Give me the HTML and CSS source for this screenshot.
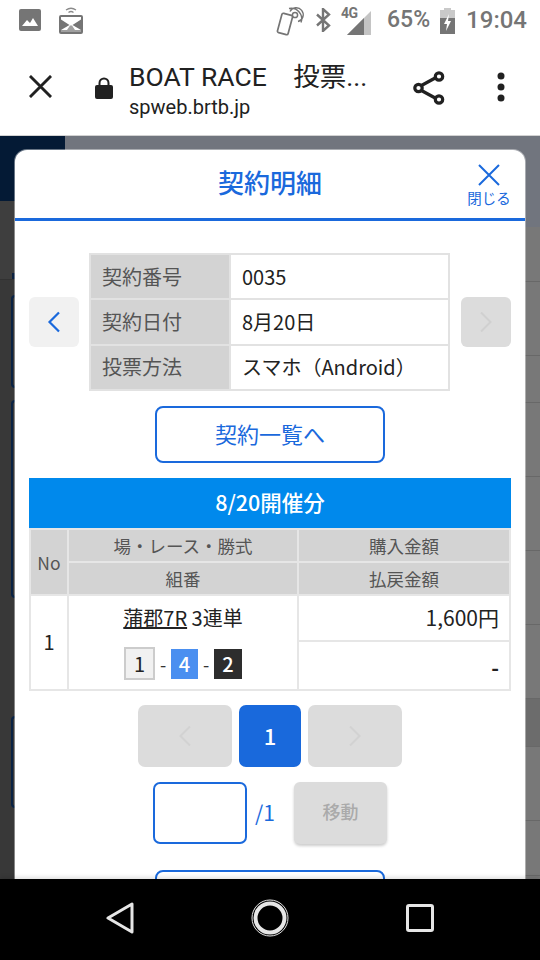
FILE: index.html
```html
<!DOCTYPE html>
<html lang="ja">
<head>
<meta charset="utf-8">
<title>契約明細</title>
<link rel="stylesheet" href="styles.css">
</head>
<body>
<div class="screen">
  <header class="status">
    <div class="status-left">
      <svg class="ic-pic" viewBox="0 0 22 22"><rect width="22" height="22" rx="2" fill="#757575"/><path d="M3 17l5-6 3 3 3-5 5 8z" fill="#fff"/></svg>
      <svg class="ic-cast" viewBox="0 0 24 28"><g fill="none" stroke="#8a8a8a" stroke-width="1.300"><path d="M7 4q5-3.500 10 0M9.500 6.500q2.500-2 5 0"/></g><rect x="1" y="10" width="22" height="17" rx="1" fill="#fff" stroke="#757575" stroke-width="2"/><path d="M2 13.500L10.500 19 2 24zM22 13.500L13.500 19 22 24z" fill="#757575"/><path d="M2 24h6l3-4.500h2l3 4.500h6v2H2z" fill="#a0a0a0"/></svg>
    </div>
    <div class="status-right">
      <svg class="ic-nfc" viewBox="0 0 30 30"><g fill="none" stroke="#757575"><rect x="4.500" y="8" width="11" height="20" rx="1.600" stroke-width="1.700" transform="rotate(15 10 18)"/><circle cx="20" cy="9" r="2.600" stroke-width="1.500"/><path d="M15 5.500a7 7 0 1 1 8 10M14 2.500a10.500 10.500 0 0 1 12 14" stroke-width="1.400"/></g></svg>
      <svg class="ic-bt" viewBox="0 0 16 24"><path d="M2 6.500l12 11-6 5.500V1l6 5.500-12 11" fill="none" stroke="#757575" stroke-width="2.400"/></svg>
      <div class="signal">
        <span class="four-g">4G</span>
        <svg class="ic-signal" viewBox="0 0 24 24"><path d="M24 0v24H0z" fill="#c4c4c4"/><path d="M17 7v17H0z" fill="#757575"/></svg>
      </div>
      <span class="pct">65%</span>
      <svg class="ic-batt" viewBox="0 0 15 26"><path d="M4 0h7v2h4v24H0V2h4z" fill="#c9c9c9"/><path d="M0 10h15v16H0z" fill="#757575"/><path d="M9 6l-5 10h3l-1 7 5-10H8z" fill="#fff"/></svg>
      <span class="clock">19:04</span>
    </div>
  </header>

  <nav class="toolbar">
    <svg class="tb-close" viewBox="0 0 24 24"><path d="M1 1l22 22M23 1L1 23" stroke="#212121" stroke-width="3" fill="none"/></svg>
    <svg class="tb-lock" viewBox="0 0 18 22"><path d="M4.500 9V6a4.500 4.500 0 0 1 9 0v3" fill="none" stroke="#212121" stroke-width="2"/><rect y="8" width="18" height="14" rx="2" fill="#212121"/></svg>
    <div class="tb-text">
      <div class="tb-title">BOAT RACE　投票...</div>
      <div class="tb-url">spweb.brtb.jp</div>
    </div>
    <svg class="tb-share" viewBox="0 0 32 34"><g fill="none" stroke="#212121" stroke-width="3.200"><path d="M7.500 15L24 6M7.500 19L24 28"/><circle cx="5.500" cy="17" r="3.700" fill="#fff"/><circle cx="26" cy="5.500" r="3.700" fill="#fff"/><circle cx="26" cy="28.500" r="3.700" fill="#fff"/></g></svg>
    <svg class="tb-more" viewBox="0 0 8 30"><circle cx="4" cy="4" r="3.500" fill="#212121"/><circle cx="4" cy="15" r="3.500" fill="#212121"/><circle cx="4" cy="26" r="3.500" fill="#212121"/></svg>
  </nav>

  <main class="page">
    <div class="backdrop">
      <div class="back-left">
        <div class="bl-navy"></div>
        <div class="bl-head"><i class="bl-tab"></i></div>
        <div class="bl-card bl-c1"></div>
        <div class="bl-card bl-c2"></div>
        <div class="bl-card bl-c3"></div>
      </div>
      <div class="back-right">
        <div class="br-band"></div>
        <div class="br-row br-a"></div>
        <div class="br-row br-b"></div>
        <div class="br-row br-c"></div>
        <div class="br-row br-b"></div>
        <div class="br-row br-b"></div>
        <div class="br-row br-b"></div>
        <div class="br-row br-b"></div>
        <div class="br-row br-c br-dark"></div>
        <div class="br-row br-b"></div>
        <div class="br-row br-a"></div>
      </div>
    </div>

    <section class="modal">
      <div class="modal-head">
        <h1 class="modal-title">契約明細</h1>
        <button class="modal-close">
          <svg class="mc-x" viewBox="0 0 22 22"><path d="M1 1l20 20M21 1L1 21" stroke="#1a69dc" stroke-width="2" fill="none"/></svg>
          <span class="mc-label">閉じる</span>
        </button>
      </div>

      <div class="modal-body">
        <div class="detail">
          <button class="side-btn side-on"><svg class="chev" viewBox="0 0 14 22"><path d="M12 1.500L2.500 11l9.500 9.500" fill="none" stroke="#1a69dc" stroke-width="2.200"/></svg></button>
          <table class="info">
            <tr><th>契約番号</th><td>0035</td></tr>
            <tr><th>契約日付</th><td>8月20日</td></tr>
            <tr><th>投票方法</th><td>スマホ（Android）</td></tr>
          </table>
          <button class="side-btn side-off"><svg class="chev" viewBox="0 0 14 22"><path d="M2 1.500L11.500 11 2 20.500" fill="none" stroke="#d0d0d0" stroke-width="2"/></svg></button>
        </div>

        <button class="outline-btn">契約一覧へ</button>

        <div class="day-bar">8/20開催分</div>
        <table class="list">
          <colgroup><col class="col-no"><col class="col-race"><col class="col-amt"></colgroup>
          <tr class="lh"><th rowspan="2">No</th><th>場・レース・勝式</th><th>購入金額</th></tr>
          <tr class="lh"><th>組番</th><th>払戻金額</th></tr>
          <tr class="lb1">
            <td rowspan="2" class="c-no">1</td>
            <td rowspan="2" class="c-race">
              <div class="race-name"><u>蒲郡7R</u> 3連単</div>
              <div class="combo"><span class="b b1">1</span><span class="dash">-</span><span class="b b4">4</span><span class="dash">-</span><span class="b b2">2</span></div>
            </td>
            <td class="c-amt">1,600円</td>
          </tr>
          <tr class="lb2"><td class="c-amt c-ref">-</td></tr>
        </table>

        <div class="pager">
          <button class="pg-arrow"><svg class="pg-chev" viewBox="0 0 14 22"><path d="M12 1.500L2.500 11l9.500 9.500" fill="none" stroke="#d2d2d2" stroke-width="2"/></svg></button>
          <button class="pg-num">1</button>
          <button class="pg-arrow"><svg class="pg-chev" viewBox="0 0 14 22"><path d="M2 1.500L11.500 11 2 20.500" fill="none" stroke="#d2d2d2" stroke-width="2"/></svg></button>
        </div>

        <div class="jump">
          <div class="jump-input"></div>
          <span class="jump-total">/1</span>
          <button class="jump-btn">移動</button>
        </div>

        <button class="outline-btn outline-next"></button>
      </div>
    </section>
  </main>

  <footer class="navbar">
    <svg class="nav-back" viewBox="0 0 28 32"><path d="M2 16L26 2v28z" fill="none" stroke="#e6e6e6" stroke-width="3" stroke-linejoin="round"/></svg>
    <svg class="nav-home" viewBox="0 0 38 38"><circle cx="19" cy="19" r="18" fill="none" stroke="#e6e6e6" stroke-width="1"/><circle cx="19" cy="19" r="14.500" fill="none" stroke="#e6e6e6" stroke-width="4"/></svg>
    <svg class="nav-recent" viewBox="0 0 28 28"><rect x="1.500" y="1.500" width="25" height="25" rx="1.500" fill="none" stroke="#e6e6e6" stroke-width="3"/></svg>
  </footer>
</div>
</body>
</html>
```

FILE: styles.css
```css
* { box-sizing: border-box; }
html, body { margin: 0; padding: 0; background: #000; }
body { font-family: "Noto Sans CJK JP", "Noto Sans", sans-serif; }
button { font-family: inherit; padding: 0; border: 0; cursor: pointer; }
h1 { margin: 0; }
svg { display: block; flex: none; }

.screen { width: 540px; height: 960px; display: flex; flex-direction: column; overflow: hidden; background: #fff; }

/* status bar */
.status { height: 40px; flex: none; display: flex; justify-content: space-between; align-items: center; padding: 0 13px 0 19px; font-family: Roboto, sans-serif; color: #757575; }
.status-left { display: flex; align-items: center; gap: 18px; }
.ic-pic { width: 22px; height: 22px; }
.ic-cast { width: 24px; height: 28px; margin-top: 0; }
.status-right { display: flex; align-items: center; }
.ic-nfc { width: 30px; height: 30px; margin-top: 2px; }
.ic-bt { width: 16px; height: 24px; margin-left: 10px; }
.signal { position: relative; width: 30px; height: 24px; margin-left: 10px; margin-top: 1px; }
.four-g { position: absolute; left: 0; top: -2px; font-size: 14px; font-weight: 700; line-height: 12px; letter-spacing: -.5px; }
.ic-signal { position: absolute; right: 0; bottom: -2px; width: 24px; height: 24px; }
.pct { font-size: 23px; font-weight: 500; margin-left: 16px; line-height: 24px; }
.ic-batt { width: 15px; height: 26px; margin-left: 10px; margin-top: 1px; }
.clock { font-size: 24px; font-weight: 500; margin-left: 11px; line-height: 24px; }

/* toolbar */
.toolbar { height: 96px; flex: none; display: flex; align-items: center; border-bottom: 1px solid #d2d2d2; padding-left: 29px; }
.tb-close { width: 23px; height: 23px; margin-top: -2px; }
.tb-lock { width: 18px; height: 24px; margin-left: 43px; margin-top: 0; }
.tb-text { width: 262px; margin-left: 16px; margin-top: 6px; font-family: Roboto, "Noto Sans CJK JP", sans-serif; color: #212121; }
.tb-title { font-size: 26.500px; line-height: 32px; white-space: nowrap; }
.tb-url { font-size: 20px; line-height: 28px; }
.tb-share { width: 32px; height: 34px; margin-left: 22px; margin-top: 0; }
.tb-more { width: 8px; height: 30px; margin-left: 52px; margin-top: -2px; }

/* page behind the dialog */
.page { position: relative; height: 743px; flex: none; overflow: hidden; }
.backdrop { display: flex; height: 100%; }
.back-left { width: 65px; background: #383838; }
.bl-navy { height: 65px; background: #041a35; }
.bl-head { height: 79px; background: #3e3e3e; border-bottom: 1px solid #323232; padding: 72px 0 0 12px; }
.bl-tab { display: block; width: 3px; height: 6px; background: #0c2240; }
.bl-card { width: 4px; margin-left: 11px; border: solid #0a2344; border-width: 2px 0 2px 2px; border-radius: 4px 0 0 4px; }
.bl-c1 { height: 93px; margin-top: 15px; }
.bl-c2 { height: 198px; margin-top: 12px; }
.bl-c3 { height: 92px; margin-top: 118px; }
.back-right { flex: 1; background: #787878; }
.br-band { height: 91px; background: #71757e; }
.br-row { border-bottom: 1px solid #686868; }
.br-a { height: 55px; }
.br-b { height: 74px; }
.br-c { height: 47px; }
.br-dark { height: 48px; background: #6c6c6c; }

/* dialog */
.modal { position: absolute; left: 15px; top: 14px; width: 510px; height: 760px; background: #fff; border-radius: 12px 12px 0 0; box-shadow: 0 0 0 1px rgba(255, 255, 255, .4); }
.modal-head { position: relative; height: 71px; border-bottom: 3px solid #1a69dc; display: flex; justify-content: center; align-items: center; }
.modal-title { font-size: 26px; font-weight: 500; color: #1a69dc; line-height: 36px; margin-top: -5px; }
.modal-close { position: absolute; right: 14px; top: 14px; width: 44px; background: none; display: flex; flex-direction: column; align-items: center; color: #1a69dc; }
.mc-x { width: 22px; height: 22px; }
.mc-label { font-size: 14.500px; line-height: 18px; margin-top: 3px; white-space: nowrap; }

.modal-body { padding: 32px 14px 0; display: flex; flex-direction: column; align-items: center; }

.detail { width: 100%; display: flex; justify-content: space-between; align-items: center; }
.side-btn { width: 50px; height: 50px; border-radius: 6px; display: flex; align-items: center; justify-content: center; }
.side-on { background: #f1f1f1; }
.side-off { background: #dcdcdc; }
.chev { width: 14px; height: 22px; }

.info { width: 361px; height: 138px; margin-right: 1px; border-collapse: collapse; table-layout: fixed; font-size: 20px; }
.info th, .info td { border: 2px solid #e2e2e2; padding: 0 0 0 11px; text-align: left; font-weight: 400; height: 45.300px; line-height: 28px; }
.info th { width: 140px; background: #d3d3d3; color: #555; }
.info td { color: #222; }

.outline-btn { width: 230px; height: 57px; margin-top: 15px; flex: none; background: #fff; border: 2px solid #1a69dc; border-radius: 8px; color: #1a69dc; font-size: 22px; padding-bottom: 3px; }
.outline-next { margin-top: 26px; }

.day-bar { width: 100%; height: 50px; margin-top: 15px; background: #0089ec; color: #fff; font-size: 21.500px; font-weight: 500; display: flex; align-items: center; justify-content: center; padding-bottom: 3px; }

.list { width: 100%; border-collapse: collapse; table-layout: fixed; font-size: 21px; }
.col-no { width: 38px; }
.col-race { width: 230px; }
.list th, .list td { border: 2px solid #e6e6e6; padding: 0; }
.list th { background: #d3d3d3; color: #555; font-weight: 400; font-size: 17.500px; text-align: center; }
.lh { height: 33px; }
.lb1 { height: 46px; }
.lb2 { height: 49px; }
.list td { color: #222; }
.c-no { text-align: center; padding-bottom: 3px !important; font-size: 20px; }
.c-race { text-align: center; vertical-align: top; }
.race-name { margin-top: 7px; font-size: 20px; line-height: 30px; }
.combo { display: flex; align-items: center; justify-content: center; margin-top: 14px; }
.b { display: flex; align-items: center; justify-content: center; height: 30px; width: 27px; font-size: 20px; line-height: 1; }
.b1 { width: 31px; height: 33px; background: #f1f1f1; border: 2px solid #ccc; color: #222; }
.b4 { background: #4a8ff0; color: #fff; font-weight: 500; }
.b2 { width: 28px; background: #2d2d2d; color: #fff; font-weight: 500; }
.dash { width: 16px; text-align: center; font-size: 18px; color: #333; }
.c-amt { text-align: right; padding-right: 10px !important; padding-bottom: 3px !important; }
.c-ref { font-weight: 700; padding-bottom: 0 !important; padding-top: 2px !important; }

.pager { display: flex; gap: 7px; margin-top: 14px; }
.pg-arrow { width: 94px; height: 62px; border-radius: 7px; background: #dcdcdc; display: flex; align-items: center; justify-content: center; }
.pg-chev { width: 14px; height: 22px; }
.pg-num { width: 62px; height: 62px; border-radius: 7px; background: #1969dc; color: #fff; font-size: 22px; font-weight: 500; padding-bottom: 3px; }

.jump { display: flex; align-items: center; margin-top: 15px; align-self: flex-start; margin-left: 124px; }
.jump-input { width: 94px; height: 62px; border: 2px solid #1a69dc; border-radius: 7px; background: #fff; }
.jump-total { width: 47px; padding: 0 0 3px 8px; font-size: 21px; color: #1a69dc; }
.jump-btn { width: 93px; height: 62px; border-radius: 6px; background: #dcdcdc; color: #aaa; font-size: 18px; font-weight: 500; box-shadow: 0 2px 3px rgba(0, 0, 0, .2); padding-bottom: 4px; }

/* nav bar */
.navbar { position: relative; flex: 1; background: #000; display: flex; align-items: center; box-shadow: 0 -2px 4px rgba(0, 0, 0, .12); padding: 0 0 4px 106px; }
.nav-back { width: 28px; height: 32px; }
.nav-home { width: 38px; height: 38px; margin-left: 117px; }
.nav-recent { width: 28px; height: 28px; margin-left: 117px; }
```
